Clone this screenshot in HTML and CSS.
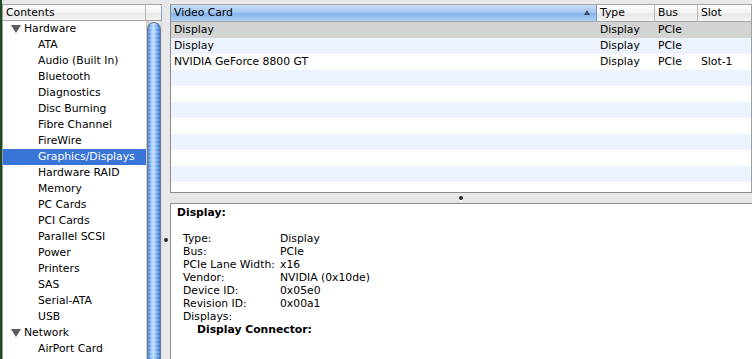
FILE: index.html
```html
<!DOCTYPE html>
<html lang="en">
<head>
    <meta charset="UTF-8">
    <title>System Profiler</title>
    <link rel="stylesheet" href="styles.css">
</head>
<body>
    <div class="desk"></div>

    <!-- Contents tree -->
    <div class="sidebar">
        <div class="sb-head">
            <div class="hcell grow">Contents</div>
            <div class="hcorner"></div>
        </div>
        <div class="sb-body">
            <ul class="tree">
                <li class="group"><span class="disclose"></span>Hardware</li>
                <li>ATA</li>
                <li>Audio (Built In)</li>
                <li>Bluetooth</li>
                <li>Diagnostics</li>
                <li>Disc Burning</li>
                <li>Fibre Channel</li>
                <li>FireWire</li>
                <li class="selected">Graphics/Displays</li>
                <li>Hardware RAID</li>
                <li>Memory</li>
                <li>PC Cards</li>
                <li>PCI Cards</li>
                <li>Parallel SCSI</li>
                <li>Power</li>
                <li>Printers</li>
                <li>SAS</li>
                <li>Serial-ATA</li>
                <li>USB</li>
                <li class="group"><span class="disclose"></span>Network</li>
                <li>AirPort Card</li>
            </ul>
            <div class="scroll"><div class="thumb"></div></div>
        </div>
    </div>

    <div class="vsplit"><span class="grip"></span></div>

    <div class="main">
        <!-- Device list -->
        <div class="table-pane">
            <div class="trow thead">
                <div class="cell sorted">Video Card<span class="sort-arrow"></span></div>
                <div class="cell">Type</div>
                <div class="cell">Bus</div>
                <div class="cell last">Slot</div>
            </div>
            <div class="trow current">
                <div class="cell">Display</div>
                <div class="cell">Display</div>
                <div class="cell">PCIe</div>
                <div class="cell"></div>
            </div>
            <div class="trow alt">
                <div class="cell">Display</div>
                <div class="cell">Display</div>
                <div class="cell">PCIe</div>
                <div class="cell"></div>
            </div>
            <div class="trow">
                <div class="cell">NVIDIA GeForce 8800 GT</div>
                <div class="cell">Display</div>
                <div class="cell">PCIe</div>
                <div class="cell">Slot-1</div>
            </div>
            <div class="trow alt"></div>
            <div class="trow"></div>
            <div class="trow alt"></div>
            <div class="trow"></div>
            <div class="trow alt"></div>
            <div class="trow"></div>
            <div class="trow alt"></div>
            <div class="trow"></div>
        </div>

        <div class="hsplit"><span class="grip"></span></div>

        <!-- Details -->
        <div class="detail">
            <div class="line bold">Display:</div>
            <div class="line"></div>
            <div class="props">
                <span>Type:</span><span>Display</span>
                <span>Bus:</span><span>PCIe</span>
                <span>PCIe Lane Width:</span><span>x16</span>
                <span>Vendor:</span><span>NVIDIA (0x10de)</span>
                <span>Device ID:</span><span>0x05e0</span>
                <span>Revision ID:</span><span>0x00a1</span>
                <span>Displays:</span><span></span>
            </div>
            <div class="line bold sub">Display Connector:</div>
        </div>
    </div>
</body>
</html>
```

FILE: styles.css
```css
body {
    margin: 0;
    width: 752px;
    height: 359px;
    overflow: hidden;
    display: flex;
    background-color: #e8e8e8;
    font-family: "DejaVu Sans", sans-serif;
    font-size: 10.8px;
    color: #000;
}

/* strip of desktop at the left edge */
.desk {
    width: 2px;
    background-color: #1f4a22;
}

.sidebar {
    width: 159px;
    margin-top: 4px;
    display: flex;
    flex-direction: column;
    border-left: 1px solid #9a9a9a;
    background-color: #fff;
}

.sb-head,
.thead {
    display: flex;
    height: 15px;
    line-height: 15px;
    border-top: 1px solid #a5a5a5;
    border-bottom: 1px solid #a5a5a5;
    background: linear-gradient(#ffffff, #f3f3f3 50%, #e6e6e6 55%, #f4f4f4);
}

.hcell {
    padding-left: 3px;
    border-right: 1px solid #b8b8b8;
}

.grow {
    flex: 1;
}

.hcorner {
    width: 15px;
    border-right: 1px solid #8fa8c8;
    border-top-right-radius: 3px;
}

.sb-body {
    flex: 1;
    display: flex;
    min-height: 0;
}

.tree {
    flex: 1;
    margin: 0;
    padding: 0;
    list-style: none;
}

.tree li {
    height: 16px;
    line-height: 16px;
    padding-left: 35px;
    white-space: nowrap;
}

.tree li.group {
    padding-left: 8px;
    display: flex;
    align-items: center;
}

.disclose {
    width: 0;
    height: 0;
    margin-right: 3px;
    border-left: 5px solid transparent;
    border-right: 5px solid transparent;
    border-top: 8px solid #5c5c5c;
}

.tree li.selected {
    background-color: #3875d7;
    color: #fff;
}

/* aqua scroller */
.scroll {
    width: 16px;
    display: flex;
    flex-direction: column;
    background: linear-gradient(to right, #c8c8c8, #eeeeee 40%, #f6f6f6 70%, #d4d4d4);
}

.thumb {
    flex: 1;
    margin: 1px 1px 0 1px;
    border: 1px solid #6b7f99;
    border-bottom: none;
    border-radius: 7px 7px 0 0;
    background:
        repeating-linear-gradient(to bottom, rgba(255, 255, 255, 0.18) 0 2px, rgba(0, 0, 0, 0) 2px 4px),
        linear-gradient(to right, #3f78cf, #8fc2f8 25%, #c3e0ff 45%, #8cbcf4 65%, #4a86da 90%, #3a6cbc);
}

.vsplit {
    width: 8px;
    display: flex;
    justify-content: center;
    padding-top: 238px;
    box-sizing: border-box;
}

.grip {
    width: 4px;
    height: 4px;
    border-radius: 50%;
    background-color: #2a2a2a;
    box-shadow: 0 1px 0 #ffffff;
}

.main {
    flex: 1;
    margin-top: 4px;
    display: flex;
    flex-direction: column;
}

.table-pane {
    height: 189px;
    overflow: hidden;
    border-left: 1px solid #8c8c8c;
    border-right: 1px solid #a0a0a0;
    border-bottom: 1px solid #8c8c8c;
    background-color: #fff;
    box-sizing: border-box;
}

.trow {
    display: grid;
    grid-template-columns: 426px 58px 43px auto;
    height: 16px;
    line-height: 16px;
}

.thead {
    display: grid;
    grid-template-columns: 426px 58px 43px auto;
}

.cell {
    padding-left: 3px;
    white-space: nowrap;
    overflow: hidden;
}

.thead .cell {
    border-right: 1px solid #b8b8b8;
}

.thead .cell.last {
    border-right: none;
}

.thead .sorted {
    position: relative;
    background: linear-gradient(#c6dcf6, #a6c7f0 45%, #85b3ec 55%, #b3d1f6);
    border-right-color: #7c98c0;
}

.sort-arrow {
    position: absolute;
    right: 6px;
    top: 5px;
    width: 0;
    height: 0;
    border-left: 3px solid transparent;
    border-right: 3px solid transparent;
    border-bottom: 5px solid #404a58;
}

.trow.current {
    background-color: #d4d4d4;
}

.trow.alt {
    background-color: #edf3fe;
}

.hsplit {
    height: 10px;
    display: flex;
    justify-content: center;
    align-items: center;
    background-color: #e6e6e6;
}

.detail {
    flex: 1;
    padding: 2px 0 0 6px;
    border-top: 1px solid #8c8c8c;
    border-left: 1px solid #8c8c8c;
    background-color: #fff;
    line-height: 13px;
}

.line {
    height: 13px;
}

.bold {
    font-weight: bold;
}

.props {
    display: grid;
    grid-template-columns: 97px auto;
    padding-left: 6px;
}

.sub {
    padding-left: 20px;
}
```
